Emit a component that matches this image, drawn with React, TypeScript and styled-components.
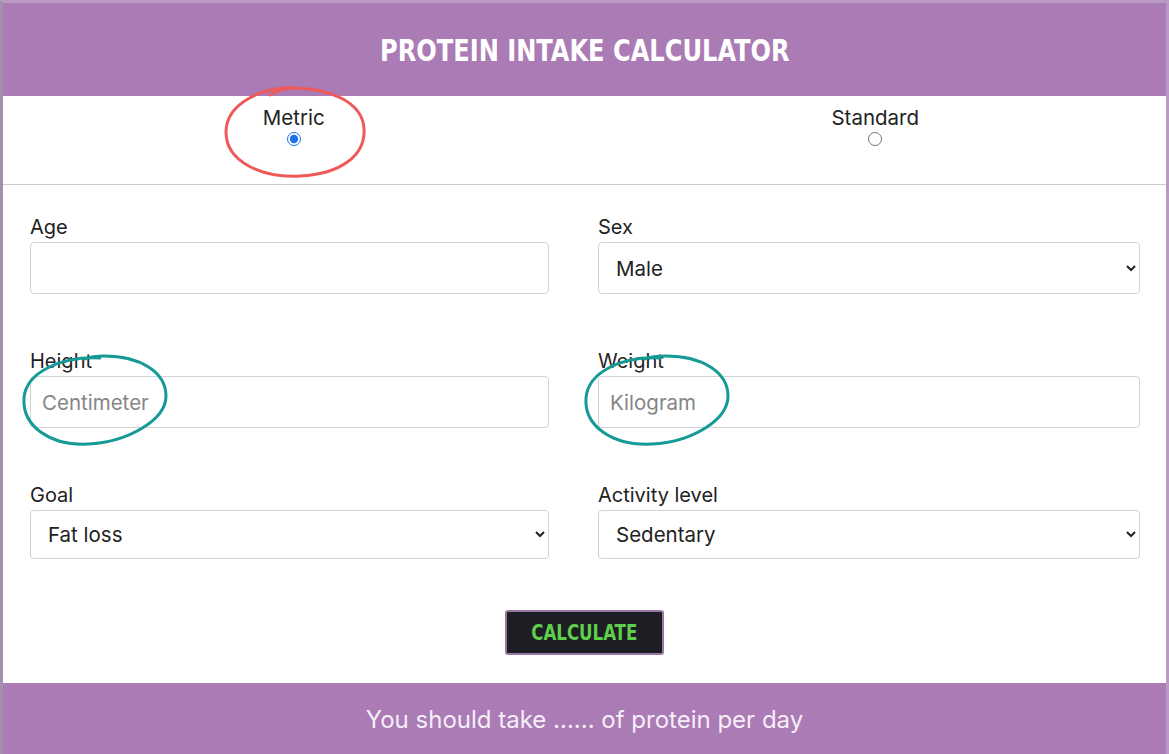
import React from "react";
import styled, { createGlobalStyle } from "styled-components";

const Global = createGlobalStyle`
  html, body { margin: 0; padding: 0; background: #ffffff; }
  #root { width: 1169px; height: 754px; }
  * { box-sizing: border-box; }
`;

const Frame = styled.div`
  position: relative;
  width: 1169px;
  height: 754px;
  overflow: hidden;
  border: 3px solid #b89ac2;
  border-left-color: #a28fab;
  border-bottom: none;
  display: flex;
  flex-direction: column;
  background: #fff;
  font-family: "Inter", "Lato", "Liberation Sans", sans-serif;
  color: #222;
`;

const Header = styled.header`
  height: 93px;
  background: #aa7bb5;
  display: flex;
  align-items: center;
  justify-content: center;
`;

const Title = styled.h1`
  margin: 0;
  font-family: "DejaVu Sans Condensed", "DejaVu Sans", sans-serif;
  font-stretch: condensed;
  font-weight: 700;
  font-size: 31px;
  color: #ffffff;
  transform: scaleX(0.865);
`;

const UnitRow = styled.div`
  height: 89px;
  display: grid;
  grid-template-columns: 1fr 1fr;
  border-bottom: 1px solid #cfc9d2;
`;

const UnitOption = styled.label`
  display: flex;
  flex-direction: column;
  align-items: center;
  padding-top: 10px;
  font-size: 20.5px;
  line-height: 23px;
  color: #222;
`;

const Radio = styled.input`
  margin: 3px 0 0;
  width: 14px;
  height: 14px;
  accent-color: #1a73e8;
`;

const Form = styled.div`
  display: grid;
  grid-template-columns: 519px 542px;
  column-gap: 49px;
  row-gap: 55px;
  padding: 30px 26px 0 27px;
`;

const Field = styled.div`
  display: flex;
  flex-direction: column;
`;

const Label = styled.label`
  font-size: 20px;
  line-height: 24px;
  color: #222;
  margin-bottom: 3px;
`;

const TextInput = styled.input`
  height: 52px;
  border: 1px solid #d2d2d6;
  border-radius: 4px;
  padding: 0 11px;
  font-family: "Inter", "Lato", "Liberation Sans", sans-serif;
  font-size: 20.5px;
  color: #222;
  outline: none;
  &::placeholder { color: #858585; }
`;

const Select = styled.select<{ $h: number }>`
  height: ${(p) => p.$h}px;
  border: 1px solid #d2d2d6;
  border-radius: 4px;
  padding: 0 10px 0 13px;
  font-family: "Inter", "Lato", "Liberation Sans", sans-serif;
  font-size: 20.5px;
  color: #222;
  background: #fff;
  outline: none;
`;

const ButtonRow = styled.div`
  display: flex;
  justify-content: center;
  padding-top: 51px;
  height: 124px;
`;

const CalcButton = styled.button`
  width: 159px;
  height: 45px;
  background: #1c1e23;
  border: 2px solid #9a78a4;
  border-radius: 3px;
  padding: 0;
  display: flex;
  align-items: center;
  justify-content: center;
`;

const CalcText = styled.span`
  color: #5fcf4b;
  font-family: "DejaVu Sans Condensed", "DejaVu Sans", sans-serif;
  font-stretch: condensed;
  font-weight: 700;
  font-size: 21px;
  transform: scaleX(0.88);
`;

const Footer = styled.footer`
  flex: 1;
  background: #aa7bb5;
  display: flex;
  justify-content: center;
  padding-top: 22px;
  font-size: 24px;
  color: #f6eef8;
`;

const Annotation = styled.svg`
  position: absolute;
  left: 0;
  top: 0;
  width: 1169px;
  height: 754px;
  pointer-events: none;
`;

export default function App() {
  return (
    <>
      <Global />
      <Frame>
        <Header>
          <Title>PROTEIN INTAKE CALCULATOR</Title>
        </Header>
        <UnitRow>
          <UnitOption>
            Metric
            <Radio type="radio" name="unit" defaultChecked />
          </UnitOption>
          <UnitOption>
            Standard
            <Radio type="radio" name="unit" />
          </UnitOption>
        </UnitRow>
        <Form>
          <Field>
            <Label>Age</Label>
            <TextInput type="text" />
          </Field>
          <Field>
            <Label>Sex</Label>
            <Select $h={52} defaultValue="Male">
              <option>Male</option>
              <option>Female</option>
            </Select>
          </Field>
          <Field>
            <Label>Height</Label>
            <TextInput type="text" placeholder="Centimeter" />
          </Field>
          <Field>
            <Label>Weight</Label>
            <TextInput type="text" placeholder="Kilogram" />
          </Field>
          <Field>
            <Label>Goal</Label>
            <Select $h={49} defaultValue="Fat loss">
              <option>Fat loss</option>
              <option>Maintenance</option>
              <option>Muscle gain</option>
            </Select>
          </Field>
          <Field>
            <Label>Activity level</Label>
            <Select $h={49} defaultValue="Sedentary">
              <option>Sedentary</option>
              <option>Lightly active</option>
              <option>Very active</option>
            </Select>
          </Field>
        </Form>
        <ButtonRow>
          <CalcButton>
            <CalcText>CALCULATE</CalcText>
          </CalcButton>
        </ButtonRow>
        <Footer>You should take ...... of protein per day</Footer>
      </Frame>
      <Annotation viewBox="0 0 1169 754">
        <path
          d="M296 88 C262 86 226 104 226 132 C226 162 262 178 300 176 C340 174 366 156 364 128 C362 102 330 88 292 88 C282 89 276 91 270 95"
          fill="none"
          stroke="#ee5a5a"
          strokeWidth="3"
          strokeLinecap="round"
        />
        <path
          d="M100 358 C62 356 26 372 24 398 C22 426 50 446 88 444 C128 442 166 420 166 396 C166 372 140 356 104 356 C96 356 90 357 84 359"
          fill="none"
          stroke="#159a96"
          strokeWidth="3"
          strokeLinecap="round"
        />
        <path
          d="M660 358 C622 356 588 372 586 398 C584 426 612 446 652 444 C692 442 728 420 728 396 C728 372 702 356 666 356 C656 356 650 357 644 359"
          fill="none"
          stroke="#159a96"
          strokeWidth="3"
          strokeLinecap="round"
        />
      </Annotation>
    </>
  );
}
